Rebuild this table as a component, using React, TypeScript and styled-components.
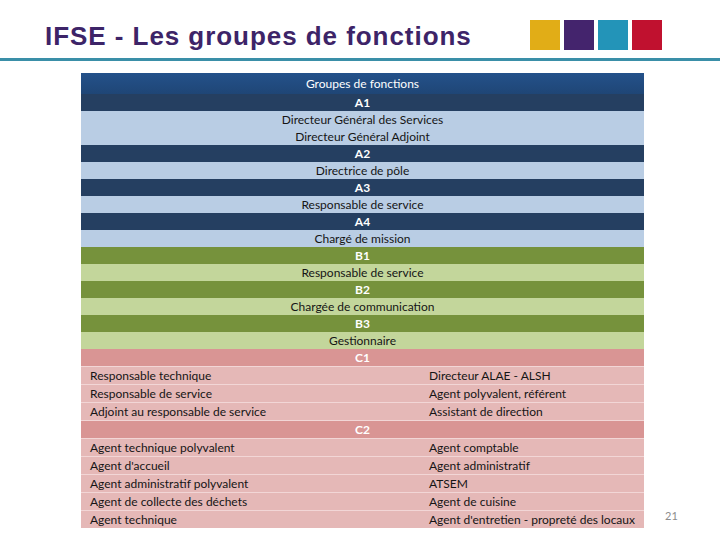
import React from 'react';
import styled, { createGlobalStyle } from 'styled-components';

const GlobalStyle = createGlobalStyle`
    html, body {
        margin: 0;
        padding: 0;
        background: #ffffff;
    }
    body {
        font-family: Lato, "Liberation Sans", Arial, sans-serif;
    }
`;

const palette = {
    head: { bg: 'linear-gradient(#24518a, #1f4676)', fg: '#ffffff' },
    navy: { bg: '#253f61', fg: '#ffffff' },
    sky: { bg: '#b9cde4', fg: '#151515' },
    olive: { bg: '#76923c', fg: '#ffffff' },
    lime: { bg: '#c3d69b', fg: '#151515' },
    rose: { bg: '#d99594', fg: '#ffffff' },
    blush: { bg: '#e5b8b7', fg: '#151515' },
};

type Tone = keyof typeof palette;

const Slide = styled.div`
    width: 720px;
    height: 540px;
    display: flex;
    flex-direction: column;
    overflow: hidden;
`;

const Header = styled.header`
    height: 58px;
    display: grid;
    grid-template-columns: 485px auto;
    padding-left: 45px;
    box-sizing: border-box;
`;

const Title = styled.h1`
    margin: 23px 0 0;
    font-family: "Liberation Sans", Arial, sans-serif;
    font-weight: bold;
    font-size: 26px;
    line-height: 26px;
    letter-spacing: 0.95px;
    color: #3d2468;
    white-space: nowrap;
`;

const Squares = styled.div`
    display: flex;
    gap: 4px;
    margin-top: 20px;
`;

const Square = styled.span<{ $color: string }>`
    width: 30px;
    height: 30px;
    background: ${({ $color }) => $color};
`;

const Rule = styled.div`
    height: 3px;
    background: #3a8fa8;
`;

const Body = styled.div`
    display: flex;
    align-items: flex-end;
    padding: 12px 0 0 81px;
`;

const Table = styled.div`
    width: 563px;
    display: flex;
    flex-direction: column;
    font-size: 12px;
`;

const Row = styled.div<{ $tone: Tone; $bold?: boolean; $tall?: boolean }>`
    height: ${({ $tall }) => ($tall ? '21px' : '17px')};
    line-height: ${({ $tall }) => ($tall ? '21px' : '17px')};
    text-align: center;
    background: ${({ $tone }) => palette[$tone].bg};
    color: ${({ $tone }) => palette[$tone].fg};
    font-weight: ${({ $bold }) => ($bold ? 700 : 400)};
    white-space: nowrap;
`;

const PinkRow = styled.div<{ $tone: Tone }>`
    display: grid;
    grid-template-columns: 339px 1fr;
    height: 17px;
    line-height: 17px;
    border-top: 1px solid #f2d6d6;
    background: ${({ $tone }) => palette[$tone].bg};
    color: ${({ $tone }) => palette[$tone].fg};
    white-space: nowrap;
`;

const Cell = styled.span`
    padding-left: 9px;
`;

const GroupLabel = styled.span`
    grid-column: 1 / 3;
    text-align: center;
    font-weight: 700;
`;

const PageNumber = styled.span`
    margin: 0 0 6px 21px;
    font-size: 11px;
    color: #8c8c8c;
`;

const squares = ['#e1ad17', '#44246d', '#2394b8', '#c0112f'];

const upper: { label: string; tone: Tone; items: string[] }[] = [
    { label: 'A1', tone: 'navy', items: ['Directeur Général des Services', 'Directeur Général Adjoint'] },
    { label: 'A2', tone: 'navy', items: ['Directrice de pôle'] },
    { label: 'A3', tone: 'navy', items: ['Responsable de service'] },
    { label: 'A4', tone: 'navy', items: ['Chargé de mission'] },
    { label: 'B1', tone: 'olive', items: ['Responsable de service'] },
    { label: 'B2', tone: 'olive', items: ['Chargée de communication'] },
    { label: 'B3', tone: 'olive', items: ['Gestionnaire'] },
];

const lightOf: Record<string, Tone> = { navy: 'sky', olive: 'lime' };

const lower: { label: string; rows: [string, string][] }[] = [
    {
        label: 'C1',
        rows: [
            ['Responsable technique', 'Directeur ALAE - ALSH'],
            ['Responsable de service', 'Agent polyvalent, référent'],
            ['Adjoint au responsable de service', 'Assistant de direction'],
        ],
    },
    {
        label: 'C2',
        rows: [
            ['Agent technique polyvalent', 'Agent comptable'],
            ["Agent d'accueil", 'Agent administratif'],
            ['Agent administratif polyvalent', 'ATSEM'],
            ['Agent de collecte des déchets', 'Agent de cuisine'],
            ['Agent technique', "Agent d'entretien - propreté des locaux"],
        ],
    },
];

export default function App() {
    return (
        <Slide>
            <GlobalStyle />
            <Header>
                <Title>IFSE - Les groupes de fonctions</Title>
                <Squares>
                    {squares.map((c) => (
                        <Square key={c} $color={c} />
                    ))}
                </Squares>
            </Header>
            <Rule />
            <Body>
                <Table>
                    <Row $tone='head' $tall>Groupes de fonctions</Row>
                    {upper.map((g) => (
                        <React.Fragment key={g.label}>
                            <Row $tone={g.tone} $bold>{g.label}</Row>
                            {g.items.map((item) => (
                                <Row key={item} $tone={lightOf[g.tone]}>{item}</Row>
                            ))}
                        </React.Fragment>
                    ))}
                    {lower.map((g, i) => (
                        <React.Fragment key={g.label}>
                            {i === 0 ? (
                                <Row $tone='rose' $bold>{g.label}</Row>
                            ) : (
                                <PinkRow $tone='rose'>
                                    <GroupLabel>{g.label}</GroupLabel>
                                </PinkRow>
                            )}
                            {g.rows.map(([left, right]) => (
                                <PinkRow key={left} $tone='blush'>
                                    <Cell>{left}</Cell>
                                    <Cell>{right}</Cell>
                                </PinkRow>
                            ))}
                        </React.Fragment>
                    ))}
                </Table>
                <PageNumber>21</PageNumber>
            </Body>
        </Slide>
    );
}
